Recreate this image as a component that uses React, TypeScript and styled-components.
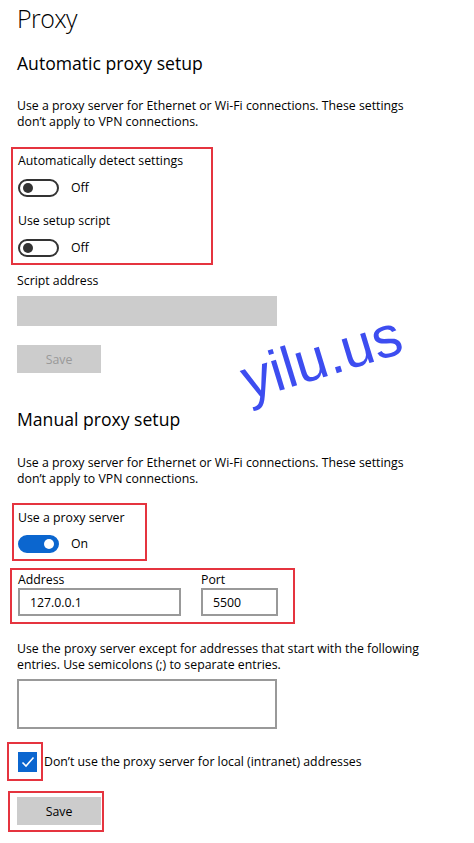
import React from 'react';
import styled, { createGlobalStyle } from 'styled-components';

const GlobalStyle = createGlobalStyle`
  html, body {
    margin: 0;
    padding: 0;
    background: #ffffff;
  }
  body {
    font-family: "Open Sans", "Noto Sans", Arial, sans-serif;
    color: #000000;
  }
`;

const Page = styled.div`
  position: relative;
  width: 474px;
  height: 843px;
  overflow: hidden;
  padding-left: 17px;
  box-sizing: border-box;
`;

const Title = styled.h1`
  margin: 0;
  font-size: 25px;
  font-weight: 300;
  letter-spacing: -0.6px;
  line-height: 36px;
`;

const SectionTitle = styled.h2<{ $gap: number }>`
  margin: ${({ $gap }) => $gap}px 0 0;
  font-size: 17.6px;
  font-weight: 400;
  line-height: 26px;
`;

const Note = styled.p<{ $gap: number }>`
  margin: ${({ $gap }) => $gap}px 0 0;
  width: 406px;
  font-size: 12.3px;
  line-height: 16px;
`;

const Highlight = styled.div<{ $gap: number; $left: number; $width: number; $pad: string }>`
  box-sizing: border-box;
  margin-top: ${({ $gap }) => $gap}px;
  margin-left: ${({ $left }) => $left}px;
  width: ${({ $width }) => $width}px;
  padding: ${({ $pad }) => $pad};
  border: 2px solid #e5343f;
`;

const FieldLabel = styled.div<{ $gap?: number }>`
  margin-top: ${({ $gap = 0 }) => $gap}px;
  font-size: 12.3px;
  line-height: 16px;
`;

const ToggleRow = styled.div<{ $gap: number }>`
  display: flex;
  align-items: center;
  gap: 12px;
  margin-top: ${({ $gap }) => $gap}px;
  font-size: 12.3px;
  line-height: 18px;
`;

const Switch = styled.span<{ $on: boolean }>`
  box-sizing: border-box;
  display: flex;
  align-items: center;
  justify-content: ${({ $on }) => ($on ? 'flex-end' : 'flex-start')};
  width: 41px;
  height: 18px;
  padding: 0 3px;
  border-radius: 9px;
  border: 2px solid ${({ $on }) => ($on ? '#0b66cf' : '#333333')};
  background: ${({ $on }) => ($on ? '#0b66cf' : '#ffffff')};

  &::after {
    content: '';
    width: 10px;
    height: 10px;
    border-radius: 50%;
    background: ${({ $on }) => ($on ? '#ffffff' : '#333333')};
  }
`;

const TextBox = styled.div<{ $gap?: number; $width: number; $height: number; $disabled?: boolean }>`
  box-sizing: border-box;
  display: flex;
  align-items: center;
  margin-top: ${({ $gap = 0 }) => $gap}px;
  width: ${({ $width }) => $width}px;
  height: ${({ $height }) => $height}px;
  padding: 0 10px;
  border: ${({ $disabled }) => ($disabled ? 'none' : '2px solid #999999')};
  background: ${({ $disabled }) => ($disabled ? '#cccccc' : '#ffffff')};
  font-size: 12.3px;
`;

const Button = styled.div<{ $disabled?: boolean }>`
  display: flex;
  align-items: center;
  justify-content: center;
  width: 84px;
  height: 28px;
  background: #cccccc;
  color: ${({ $disabled }) => ($disabled ? '#999999' : '#000000')};
  font-size: 12.3px;
`;

const ButtonSlot = styled.div<{ $gap: number }>`
  margin-top: ${({ $gap }) => $gap}px;
`;

const FieldRow = styled.div`
  display: flex;
  gap: 20px;
`;

const Field = styled.div`
  display: flex;
  flex-direction: column;
`;

const CheckRow = styled.div<{ $gap: number }>`
  display: flex;
  align-items: center;
  gap: 1px;
  margin-top: ${({ $gap }) => $gap}px;
  margin-left: -10px;
  font-size: 12.3px;
`;

const CheckBox = styled.span`
  display: flex;
  align-items: center;
  justify-content: center;
  width: 19px;
  height: 20px;
  background: #0b66cf;
`;

const Watermark = styled.div`
  position: absolute;
  left: 239px;
  top: 328px;
  font-family: "Liberation Sans", Arial, sans-serif;
  font-size: 58px;
  line-height: 58px;
  color: #3d4df0;
  transform: rotate(-17deg);
  transform-origin: center;
  white-space: nowrap;
`;

const Toggle: React.FC<{ on: boolean; gap: number }> = ({ on, gap }) => (
  <ToggleRow $gap={gap}>
    <Switch $on={on} />
    <span>{on ? 'On' : 'Off'}</span>
  </ToggleRow>
);

const App: React.FC = () => (
  <>
    <GlobalStyle />
    <Page>
      <Title>Proxy</Title>

      <SectionTitle $gap={14}>Automatic proxy setup</SectionTitle>
      <Note $gap={22}>
        Use a proxy server for Ethernet or Wi-Fi connections. These settings don’t apply to VPN connections.
      </Note>

      <Highlight $gap={17} $left={-6} $width={202} $pad="4px 0 6px 5px">
        <FieldLabel>Automatically detect settings</FieldLabel>
        <Toggle on={false} gap={10} />
        <FieldLabel $gap={16}>Use setup script</FieldLabel>
        <Toggle on={false} gap={10} />
      </Highlight>

      <FieldLabel $gap={8}>Script address</FieldLabel>
      <TextBox $gap={7} $width={260} $height={30} $disabled />
      <ButtonSlot $gap={19}>
        <Button $disabled>Save</Button>
      </ButtonSlot>

      <SectionTitle $gap={33}>Manual proxy setup</SectionTitle>
      <Note $gap={23}>
        Use a proxy server for Ethernet or Wi-Fi connections. These settings don’t apply to VPN connections.
      </Note>

      <Highlight $gap={16} $left={-5} $width={135} $pad="5px 0 6px 4px">
        <FieldLabel>Use a proxy server</FieldLabel>
        <Toggle on gap={9} />
      </Highlight>

      <Highlight $gap={7} $left={-7} $width={285} $pad="2px 0 6px 6px">
        <FieldRow>
          <Field>
            <FieldLabel>Address</FieldLabel>
            <TextBox $width={163} $height={28}>127.0.0.1</TextBox>
          </Field>
          <Field>
            <FieldLabel>Port</FieldLabel>
            <TextBox $width={77} $height={28}>5500</TextBox>
          </Field>
        </FieldRow>
      </Highlight>

      <Note $gap={17}>
        Use the proxy server except for addresses that start with the following entries. Use semicolons (;) to
        separate entries.
      </Note>
      <TextBox $gap={6} $width={260} $height={50} />

      <CheckRow $gap={13}>
        <Highlight $gap={0} $left={0} $width={36} $pad="8px 0 7px 9px">
          <CheckBox>
            <svg width="14" height="12" viewBox="0 0 14 12" fill="none">
              <path d="M1.5 6.5 L5 10 L12.5 1.5" stroke="#ffffff" strokeWidth="1.6" />
            </svg>
          </CheckBox>
        </Highlight>
        <span>Don’t use the proxy server for local (intranet) addresses</span>
      </CheckRow>

      <Highlight $gap={10} $left={-9} $width={96} $pad="4px 1px 5px 7px">
        <Button>Save</Button>
      </Highlight>

      <Watermark>yilu.us</Watermark>
    </Page>
  </>
);

export default App;
